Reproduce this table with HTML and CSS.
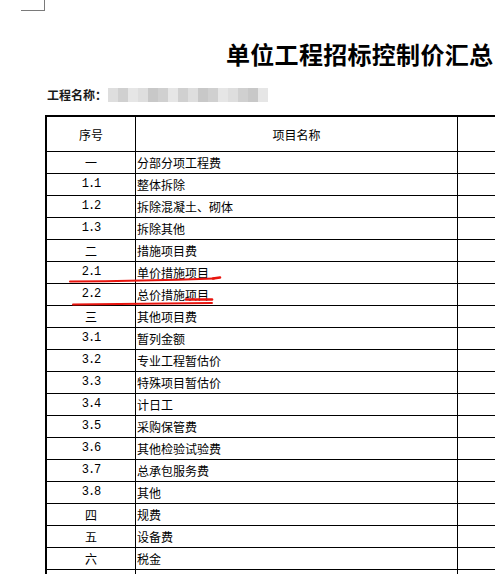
FILE: index.html
```html
<!DOCTYPE html>
<html lang="zh">
<head>
<meta charset="utf-8">
<link rel="stylesheet" href="styles.css">
</head>
<body>
<div class="page">
  <div class="corner"></div>
  <h1 class="title">单位工程招标控制价汇总</h1>
  <div class="info">
    <span class="label">工程名称：</span>
    <span class="mask">
      <i class="m a"></i><i class="m b"></i><i class="m c"></i><i class="m a"></i><i class="m d"></i><i class="m b"></i><i class="m c"></i><i class="m b"></i><i class="m a"></i><i class="m d"></i><i class="m b"></i><i class="m c"></i><i class="m a"></i><i class="m b"></i><i class="m d"></i><i class="m c"></i>
    </span>
  </div>
  <div class="sheet">
    <div class="row head"><div class="c1">序号</div><div class="c2 center">项目名称</div><div class="c3"></div></div>
    <div class="row"><div class="c1">一</div><div class="c2">分部分项工程费</div><div class="c3"></div></div>
    <div class="row"><div class="c1 num">1.1</div><div class="c2">整体拆除</div><div class="c3"></div></div>
    <div class="row"><div class="c1 num">1.2</div><div class="c2">拆除混凝土、砌体</div><div class="c3"></div></div>
    <div class="row"><div class="c1 num">1.3</div><div class="c2">拆除其他</div><div class="c3"></div></div>
    <div class="row"><div class="c1">二</div><div class="c2">措施项目费</div><div class="c3"></div></div>
    <div class="row"><div class="c1 num">2.1</div><div class="c2">单价措施项目</div><div class="c3"></div></div>
    <div class="row"><div class="c1 num">2.2</div><div class="c2">总价措施项目</div><div class="c3"></div></div>
    <div class="row"><div class="c1">三</div><div class="c2">其他项目费</div><div class="c3"></div></div>
    <div class="row"><div class="c1 num">3.1</div><div class="c2">暂列金额</div><div class="c3"></div></div>
    <div class="row"><div class="c1 num">3.2</div><div class="c2">专业工程暂估价</div><div class="c3"></div></div>
    <div class="row"><div class="c1 num">3.3</div><div class="c2">特殊项目暂估价</div><div class="c3"></div></div>
    <div class="row"><div class="c1 num">3.4</div><div class="c2">计日工</div><div class="c3"></div></div>
    <div class="row"><div class="c1 num">3.5</div><div class="c2">采购保管费</div><div class="c3"></div></div>
    <div class="row"><div class="c1 num">3.6</div><div class="c2">其他检验试验费</div><div class="c3"></div></div>
    <div class="row"><div class="c1 num">3.7</div><div class="c2">总承包服务费</div><div class="c3"></div></div>
    <div class="row"><div class="c1 num">3.8</div><div class="c2">其他</div><div class="c3"></div></div>
    <div class="row"><div class="c1">四</div><div class="c2">规费</div><div class="c3"></div></div>
    <div class="row"><div class="c1">五</div><div class="c2">设备费</div><div class="c3"></div></div>
    <div class="row"><div class="c1">六</div><div class="c2">税金</div><div class="c3"></div></div>
    <div class="row"><div class="c1"></div><div class="c2"></div><div class="c3"></div></div>
  </div>
  <svg class="marks" width="495" height="574" viewBox="0 0 495 574">
    <path d="M70 281.5 Q 140 281 214 278.5" />
    <path d="M213 278.5 L 220 277.5" class="thick" />
    <path d="M73 304.5 Q 140 304 212 303" />
    <path d="M186 299.5 L 212 299.5" class="thick" />
  </svg>
</div>
</body>
</html>
```
FILE: styles.css
```css
html, body {
  margin: 0;
  padding: 0;
  background: #fff;
  overflow: hidden;
}
.page {
  position: relative;
  width: 495px;
  height: 574px;
  overflow: hidden;
  font-family: "Noto Sans CJK SC", sans-serif;
  color: #000;
}
.corner {
  width: 24px;
  height: 11px;
  margin-left: 21px;
  border-right: 1px solid #7a7a7a;
  border-bottom: 1px solid #7a7a7a;
  box-sizing: border-box;
}
.title {
  margin: 28px 0 0 0;
  padding-left: 226px;
  height: 30px;
  line-height: 30px;
  font-size: 24px;
  font-weight: 700;
  letter-spacing: 0.3px;
  white-space: nowrap;
}
.info {
  margin-top: 18px;
  margin-left: 47px;
  height: 16px;
  display: flex;
  align-items: center;
  font-size: 12px;
  line-height: 16px;
}
.label {
  font-weight: 700;
  color: #1a1a1a;
}
.mask {
  display: flex;
  margin-left: 1px;
  height: 14px;
  filter: blur(0.6px);
}
.m {
  display: block;
  width: 10px;
  height: 14px;
}
.m.a { background: #dedede; }
.m.b { background: #d0d0d0; }
.m.c { background: #e6e6e6; }
.m.d { background: #c8c8c8; }
.sheet {
  margin-top: 12px;
  margin-left: 45px;
  width: 620px;
  border-left: 2px solid #000;
  border-top: 2px solid #000;
}
.row {
  display: flex;
  height: 22px;
  box-sizing: border-box;
  border-bottom: 1px solid #000;
  font-size: 12px;
  line-height: 21px;
}
.row.head {
  height: 35px;
  line-height: 36px;
}
.c1 {
  width: 89px;
  flex: none;
  box-sizing: border-box;
  border-right: 1px solid #000;
  text-align: center;
}
.c2 {
  width: 322px;
  flex: none;
  box-sizing: border-box;
  border-right: 1px solid #000;
  padding-left: 1px;
  white-space: nowrap;
}
.c2.center {
  text-align: center;
  padding-left: 0;
}
.c3 {
  flex: 1;
}
.num {
  font-family: "Liberation Mono", monospace;
  font-size: 12px;
  letter-spacing: -1.1px;
}
.marks {
  position: absolute;
  left: 0;
  top: 0;
  pointer-events: none;
}
.marks path {
  fill: none;
  stroke: #e8140e;
  stroke-width: 2;
  stroke-linecap: round;
}
.marks path.thick {
  stroke-width: 2.6;
}
```
